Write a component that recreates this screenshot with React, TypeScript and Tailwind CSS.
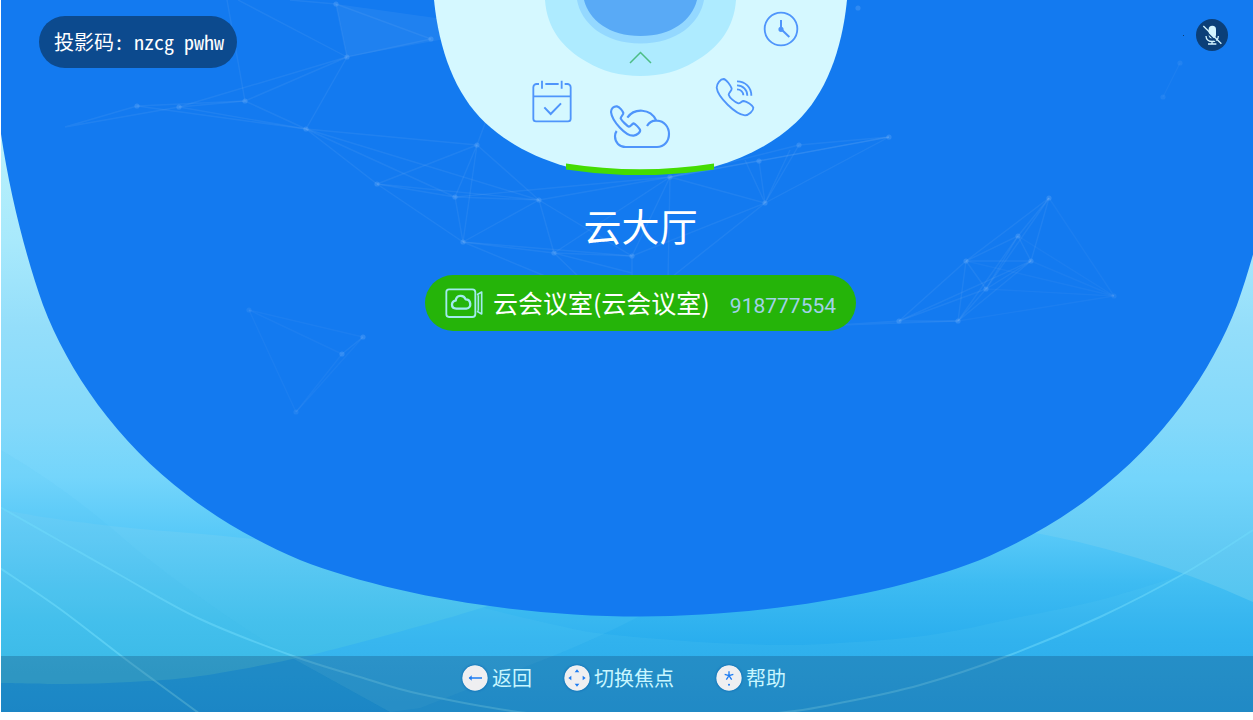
import type { ReactNode } from "react";

type Point = [number, number];

/** Smooth curve through a list of points (Catmull-Rom turned into cubic Béziers). */
function curve(points: Point[], lead: "M" | "L" = "M"): string {
  let d = `${lead}${points[0][0]} ${points[0][1]}`;
  for (let i = 0; i < points.length - 1; i++) {
    const a = points[Math.max(i - 1, 0)];
    const b = points[i];
    const c = points[i + 1];
    const e = points[Math.min(i + 2, points.length - 1)];
    d += `C${b[0] + (c[0] - a[0]) / 6} ${b[1] + (c[1] - a[1]) / 6} ${c[0] - (e[0] - b[0]) / 6} ${c[1] - (e[1] - b[1]) / 6} ${c[0]} ${c[1]}`;
  }
  return d;
}

/** Left half of a bowl as a cubic Bézier chain, mirrored round its last point. */
function bowl(left: Point[]): string {
  const axis = left[left.length - 1][0];
  const right = left
    .slice(0, -1)
    .reverse()
    .map(([x, y]): Point => [2 * axis - x, y]);
  const [start, ...rest] = [...left, ...right];
  return `M${start.join(" ")}C${rest.map((p) => p.join(" ")).join(" ")}Z`;
}

const HALL = bowl([
  [-14, -10], [-12, 40], [-6, 87], [1, 134], [10, 195], [26, 257], [43, 305], [68, 371], [117, 442], [187, 495],
  [222, 522], [262, 544], [300, 560], [390, 595], [520, 616.5], [640, 616.5],
]);

const DIAL = bowl([
  [434, 0], [439, 50], [455, 94], [485, 122.5], [508, 144], [536, 158], [566, 166.5], [590, 171.5], [615, 173], [640.5, 173],
]);
const RING_OUTER = bowl([[545, 0], [547, 28], [562, 48], [587, 62], [602, 71], [620, 76], [640.5, 76]]);
const RING_MIDDLE = bowl([[577, 0], [581, 23], [604, 43.5], [640.5, 43.5]]);
const RING_INNER = bowl([[584, 0], [589, 20], [609, 36], [640.5, 36]]);

const NODES: Record<string, Point> = {
  A: [336, 4], B: [347, 57], C: [245, 101], D: [137, 106], E: [179, 107], F: [306, 129], G: [377, 184],
  H: [431, 39], I: [477, 145], J: [455, 197], K: [539, 200], L: [463, 242], M: [554, 253], N: [632, 256],
  O: [670, 177], P: [765, 203], Q: [759, 161], R: [799, 145], S: [889, 137], T: [858, 8], U: [1180, 63],
  V: [1163, 97], W: [1049, 198], X: [1018, 236], Y: [966, 261], Z: [1031, 261], a: [986, 289], b: [899, 321],
  c: [958, 321], d: [1114, 296], e: [249, 310], f: [363, 337], g: [342, 354], h: [296, 412],
};

const LINKS =
  "AB BC BE BF CD CE CF DF EF FG FI FK FJ GI GJ GK GL IJ IK IL JK JL JO KL KM KO KN LM LN MN MO NO NP OP QP RP QO RO QS RS PS OS UV WX WY WZ Wa Wd XY XZ Xa Xc Xd YZ Ya Yb Yc Yd Zb Zc Za Zd ab ac ad bc cd ef eg eh fg fh gh BH AH".split(" ");

/** Nodes at the rim of the mesh, which fade into the background. */
const FAINT = "UVdeh";
const isFaint = (id: string) => [...id].some((node) => FAINT.includes(node));

function Backdrop() {
  return (
    <svg
      className="absolute inset-0 h-full w-full"
      viewBox="1 0 1252 712"
      preserveAspectRatio="xMidYMin slice"
      aria-hidden="true"
    >
      <defs>
        <linearGradient id="sky" gradientUnits="userSpaceOnUse" x1="0" y1="0" x2="0" y2="712">
          <stop offset="0.19" stopColor="#b9f1fb" />
          <stop offset="0.34" stopColor="#a8e9fc" />
          <stop offset="0.46" stopColor="#94defa" />
          <stop offset="0.59" stopColor="#84d9fa" />
          <stop offset="0.67" stopColor="#74d5fb" />
          <stop offset="0.75" stopColor="#58c9f8" />
          <stop offset="0.82" stopColor="#3dbbf2" />
          <stop offset="0.9" stopColor="#2aaeee" />
          <stop offset="1" stopColor="#22a6ea" />
        </linearGradient>
        <linearGradient id="teal" gradientUnits="userSpaceOnUse" x1="0" y1="508" x2="0" y2="684">
          <stop offset="0" stopColor="#6ccff8" />
          <stop offset="0.35" stopColor="#57c7f2" />
          <stop offset="0.65" stopColor="#45c0ec" />
          <stop offset="1" stopColor="#3abae6" />
        </linearGradient>
        <linearGradient id="teal-right" gradientUnits="userSpaceOnUse" x1="0" y1="480" x2="0" y2="602">
          <stop offset="0" stopColor="#74d5fb" />
          <stop offset="0.6" stopColor="#60c9f3" />
          <stop offset="1" stopColor="#54c5f0" />
        </linearGradient>
      </defs>

      <rect x="0" y="0" width="1254" height="712" fill="url(#sky)" />
      <path
        d={curve([[400, 585], [488, 609], [560, 626], [605, 634], [700, 642], [780, 645], [840, 643], [930, 635], [1020, 617], [1100, 600], [1185, 574], [1253, 550]]) + "V712H390L292 658Z"}
        fill="#7fdcf5"
        fillOpacity="0.09"
      />
      <path d="M640 616Q600 637 553 656L420 708L390 712L292 658L420 590Z" fill="#6fd3f5" fillOpacity="0.12" />
      <path
        d={curve([[0, 509], [50, 518], [130, 528], [253, 539], [420, 560], [560, 590]]) + curve([[488, 606], [420, 626], [306, 656], [200, 676], [130, 682], [65, 684], [0, 683]], "L") + "Z"}
        fill="url(#teal)"
      />
      <path d="M1000 527Q1130 546 1253 602V478H1000Z" fill="url(#teal-right)" />
      <path d="M1 450Q70 490 137 550Q210 608 292 658L390 712H1Z" fill="#1fa8ee" fillOpacity="0.05" />

      <g fill="none" stroke="#6fdcfb" strokeWidth="2">
        <path
          strokeOpacity="0.5"
          d={curve([[0, 507], [60, 541], [120, 575], [200, 619], [293, 656], [360, 677], [420, 694], [527, 713], [650, 722], [778, 713], [840, 703], [920, 685], [1010, 655], [1100, 617], [1185, 573], [1253, 530]])}
        />
        <path strokeOpacity="0.55" d={curve([[0, 568], [60, 609], [120, 655], [155, 681], [200, 714]])} />
      </g>

      <path d={HALL} fill="#137af0" />

      <path d="M336 4L450 20V38L347 57Z" fill="#fff" fillOpacity="0.055" />
      <g stroke="#fff" strokeWidth="1.4" strokeOpacity="0.06">
        {LINKS.map((link) => {
          const [x1, y1] = NODES[link[0]];
          const [x2, y2] = NODES[link[1]];
          return <line key={link} x1={x1} y1={y1} x2={x2} y2={y2} opacity={isFaint(link) ? 0.65 : 1} />;
        })}
        <path
          fill="none"
          d="M245 101L227 0M347 57L238 0M336 4L290 0M137 106L65 127L179 107M477 145L490 110M670 177L668 280L765 203M632 256V276M554 253L632 273M463 242L545 276M554 253L580 278M765 203L745 160M765 203L790 150M899 321L840 325L958 321"
        />
      </g>
      <g fill="#8cc0ff">
        {Object.entries(NODES).map(([id, [x, y]]) => (
          <circle key={id} cx={x} cy={y} r="2.6" fillOpacity={isFaint(id) ? 0.12 : 0.24} />
        ))}
      </g>
    </svg>
  );
}

function CalendarIcon() {
  return (
    <svg className="h-11 w-10" viewBox="0 0 120 132" fill="none" stroke="#4f95fb" strokeWidth="5.5" aria-hidden="true">
      <path d="M21 12H14A10 10 0 0 0 4 22V116A8 8 0 0 0 12 124H108A8 8 0 0 0 116 116V22A10 10 0 0 0 106 12H98M40 12H80M4 49H116M30 2V26M89 2V26" />
      <path d="M37 82L56 102L87 70" strokeWidth="6" />
    </svg>
  );
}

function CloudPhoneIcon() {
  return (
    <svg className="h-[45px] w-[62px]" viewBox="0 0 186 135" fill="none" stroke="#4f95fb" strokeWidth="6.5" aria-hidden="true">
      <path d="M24 7C14 6 6 14 6 24C9 51 50 97 74 95C84 94 96 84 93 77C91 73 79 59 74 58C69 59 65 68 60 68C54 66 38 50 35 43C35 37 44 32 43 27C41 22 32 8 24 7Z" />
      <path d="M55 41C76 11 124 13 141 48M114 66C121 54 132 49 144 50C166 51 180 69 180 90C180 112 165 129 144 129H50C31 129 18 115 18 97C18 90 20 85 23 81" />
    </svg>
  );
}

function PhoneWavesIcon() {
  return (
    <svg className="h-10 w-10" viewBox="0 0 120 120" fill="none" stroke="#4f95fb" strokeWidth="5.5" aria-hidden="true">
      <path d="M26 6C16 6 5 20 5 32C8 60 62 113 90 115C100 115 116 102 115 92C112 84 96 74 86 72C79 72 77 79 70 79C59 76 43 61 41 53C41 47 51 41 50 34C47 26 34 7 26 6Z" />
      <path d="M66 13C91 13 109 31 109 56M66 25C84 25 97 39 97 56M66 37C77 37 85 45 85 55" />
    </svg>
  );
}

function ClockIcon() {
  return (
    <svg className="h-9 w-9" viewBox="0 0 108 108" fill="none" stroke="#4f95fb" strokeWidth="5.5" aria-hidden="true">
      <circle cx="54" cy="54" r="49" />
      <path d="M54 27V54L79 78" strokeWidth="6" />
      <circle cx="54" cy="55" r="5" fill="#4f95fb" />
    </svg>
  );
}

function RoomIcon() {
  return (
    <svg className="h-[30px] w-[38px] shrink-0" viewBox="0 0 114 90" fill="none" stroke="#a2ebee" strokeWidth="5.5" strokeLinejoin="round" aria-hidden="true">
      <path d="M12 4H82A9 9 0 0 1 91 13V78A9 9 0 0 1 82 87H12A8 8 0 0 1 4 79V12A8 8 0 0 1 12 4Z" />
      <path d="M96 20L110 12V78L96 70M100 22V68" strokeWidth="5" />
      <path strokeWidth="7" d="M34 62C16 61 18 40 32 38C34 20 56 19 62 34C78 34 82 60 64 62Z" />
    </svg>
  );
}

function MutedMicIcon() {
  return (
    <svg className="h-8 w-8" viewBox="0 0 96 96" aria-hidden="true">
      <rect x="38" y="20" width="22" height="38" rx="11" fill="#d3f4ff" />
      <path d="M30 51C30 73 67 73 67 51M48 68V75M36 75H61" fill="none" stroke="#d3f4ff" strokeWidth="4" />
      <path d="M19 26L72 79" stroke="#0b3f78" strokeWidth="4" />
      <path d="M22 21L76 74" stroke="#d3f4ff" strokeWidth="4" />
    </svg>
  );
}

function DialItem({ label, place, children }: { label: string; place: string; children: ReactNode }) {
  return (
    <button type="button" aria-label={label} className={`absolute ${place}`}>
      {children}
    </button>
  );
}

function Dial() {
  return (
    <nav className="relative h-[175px] w-[413px]">
      <svg className="h-full w-full" viewBox="434 0 413 175" aria-hidden="true">
        <path d={DIAL} fill="#d5f8ff" />
        <path d={RING_OUTER} fill="#aeebff" />
        <path d={RING_MIDDLE} fill="#94d8ff" />
        <path d={RING_INNER} fill="#59aaf6" />
        <path d="M630 63L640.5 52.5L651 63" fill="none" stroke="#4dbd86" strokeWidth="1.5" />
        <path d="M566 163.5Q640 175 714 163.5V169.5Q640 181 566 169.5Z" fill="#44dc02" />
      </svg>
      <DialItem label="日程" place="left-[98px] top-[80px]">
        <CalendarIcon />
      </DialItem>
      <DialItem label="云大厅" place="left-[175px] top-[104px]">
        <CloudPhoneIcon />
      </DialItem>
      <DialItem label="呼叫" place="left-[281px] top-[77px]">
        <PhoneWavesIcon />
      </DialItem>
      <DialItem label="历史" place="left-[329px] top-[11px]">
        <ClockIcon />
      </DialItem>
    </nav>
  );
}

function KeyHint({ label, children }: { label: string; children: ReactNode }) {
  return (
    <button type="button" className="flex items-center gap-1 text-xl leading-7 text-[#c8f6ff]">
      <svg className="h-[26px] w-[26px] rounded-full shadow-[0_0_2px_#0b5fae]" viewBox="0 0 78 78" aria-hidden="true">
        <circle cx="39" cy="39" r="38" fill="#efeff1" />
        {children}
      </svg>
      <span>{label}</span>
    </button>
  );
}

export default function App() {
  return (
    <div className="flex min-h-screen flex-col bg-white pb-2 pl-px font-['Noto_Sans_CJK_SC',sans-serif]">
      <div className="relative flex flex-1 flex-col overflow-hidden">
        <Backdrop />

        <header className="relative grid grid-cols-[1fr_auto_1fr] items-start pl-[27px]">
          <div className="pl-[11px] pt-4">
            <p className="flex h-[52px] w-fit items-center whitespace-pre rounded-full bg-[#0c4a8e] pl-[15px] pr-[13px] font-['Noto_Sans_Mono_CJK_SC','Noto_Sans_CJK_SC',monospace] text-xl text-white">
              投影码: nzcg pwhw
            </p>
          </div>
          <Dial />
          <div className="flex items-center justify-end gap-3 pr-[25px] pt-[19px]">
            <span className="size-px bg-[#0b3f78]" />
            <button type="button" aria-label="麦克风已静音" className="rounded-full bg-[#0b3f78]">
              <MutedMicIcon />
            </button>
          </div>
        </header>

        <main className="relative flex flex-1 flex-col items-center gap-[26px] pb-8 pl-[27px] pt-[26px]">
          <h1 className="text-[38px] leading-[48px] text-white">云大厅</h1>
          <button type="button" className="flex h-14 items-center gap-[10px] rounded-full bg-[#25b409] px-5">
            <RoomIcon />
            <span className="flex items-baseline gap-5">
              <span className="text-[25px] leading-9 text-white">云会议室(云会议室)</span>
              <span className="font-[Roboto,sans-serif] text-[21px] text-[#a3d2e8]">918777554</span>
            </span>
          </button>
        </main>

        <footer className="relative flex h-14 items-center justify-center gap-[42px] bg-[rgba(0,10,50,0.2)] pb-3 pr-1.5">
          <div className="flex gap-8">
            <KeyHint label="返回">
              <path d="M22 39H60" stroke="#1d7cf2" strokeWidth="4" />
              <path d="M20 39L29 31V47Z" fill="#1d7cf2" />
            </KeyHint>
            <KeyHint label="切换焦点">
              <path d="M39 13L46 22H32ZM39 65L46 56H32ZM13 39L22 32V46ZM65 39L56 32V46Z" fill="#1d7cf2" />
            </KeyHint>
          </div>
          <KeyHint label="帮助">
            <path d="M39 19V32M39 32L26 28M39 32L52 28M39 32L31 44M39 32L47 44" stroke="#1d7cf2" strokeWidth="4" />
            <circle cx="39" cy="59" r="3" fill="#1d7cf2" />
          </KeyHint>
        </footer>
      </div>
    </div>
  );
}
